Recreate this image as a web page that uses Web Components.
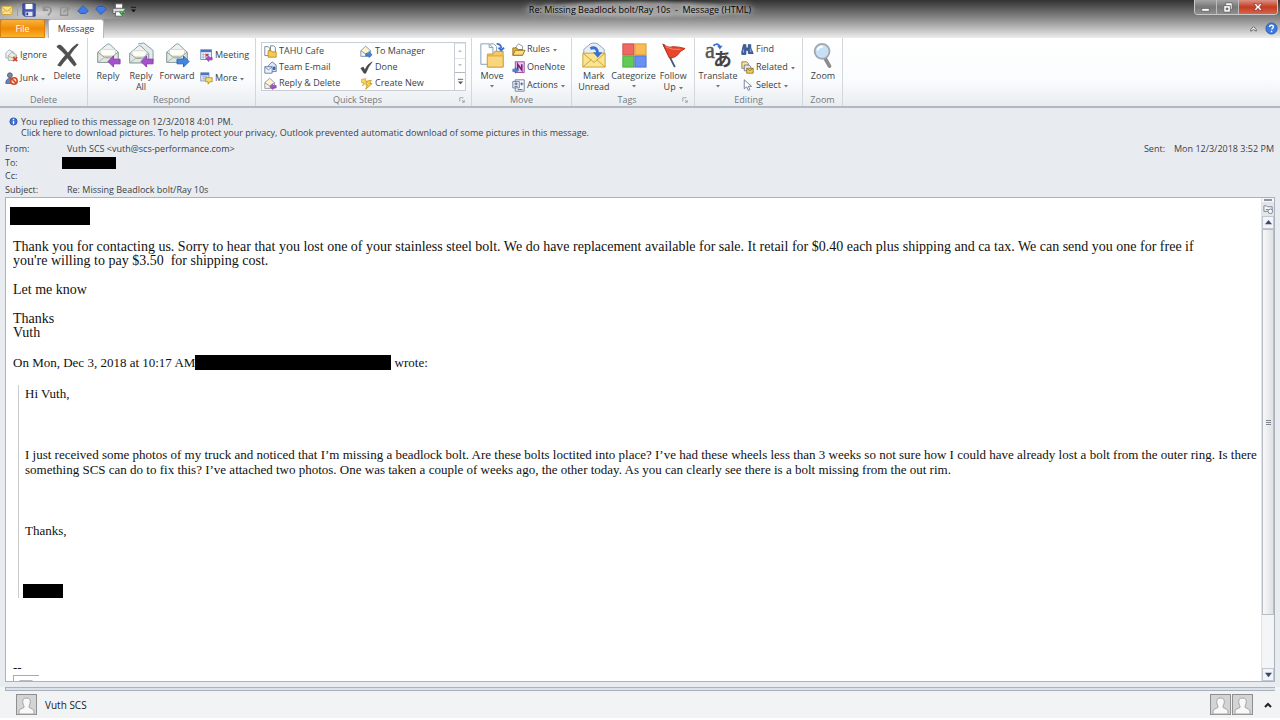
<!DOCTYPE html>
<html lang="en">
<head>
<meta charset="utf-8">
<meta name="viewport" content="width=device-width, initial-scale=1">
<title>Re: Missing Beadlock bolt/Ray 10s - Message (HTML)</title>
<style>
  html, body { margin: 0; height: 100%; }
  body {
    display: flex;
    flex-direction: column;
    overflow: hidden;
    background: #e8ecf1;
    color: #3b3f46;
    font-family: "Open Sans", "Noto Sans", sans-serif;
    font-size: 9px;
    line-height: 12px;
  }
  message-pane { flex: 1; min-height: 0; }
</style>
</head>
<body>
<title-bar>Re: Missing Beadlock bolt/Ray 10s&nbsp; -&nbsp; Message (HTML)</title-bar>
<ribbon-tabs></ribbon-tabs>
<message-ribbon></message-ribbon>
<message-header></message-header>
<message-pane>
  <mail-body></mail-body>
</message-pane>
<people-pane name="Vuth SCS"></people-pane>

<script>
/* ------------------------------------------------------------------ */
/*  Icons                                                              */
/* ------------------------------------------------------------------ */

const ENVELOPE = `
  <path d="M3 11 L13 2.500 Q14.500 1.500 16 2.500 L25 11 V22 H3Z" fill="#edf1f2" stroke="#8497a5"/>
  <path d="M6 8 H22 V15 H6Z" fill="#fdfdf4" stroke="#c3c9bd" stroke-width=".7"/>
  <path d="M3 11 L11 17 H17 L25 11 V22 H3Z" fill="#e3e8df" stroke="#8d9c9c"/>
  <path d="M3 22 L11 16 H17 L25 22" fill="none" stroke="#a5b0ae"/>`;

const PERSON = `
  <rect x=".5" y=".5" width="20" height="20" fill="#d4d4d4" stroke="#8f8f8f"/>
  <path d="M3 20 V17 Q3 15 8 13.500 Q8.500 12.500 7 10 Q5.500 4 10.500 4 Q15.500 4 14 10 Q12.500 12.500 13 13.500 Q18 15 18 17 V20Z" fill="#f9f9f9" stroke="#a5a5a5"/>`;

// name: [viewBox, markup]
const ICONS = {
  mail: ['0 0 16 16', `
    <rect x="1" y="3" width="14" height="11" rx="1" fill="#fbe28a" stroke="#c89a2a"/>
    <path d="M1 4 L8 10 L15 4 M1 13 L6 8 M15 13 L10 8" fill="none" stroke="#c89a2a"/>`],
  save: ['0 0 16 16', `
    <path d="M1 1 H15 V15 H3 L1 13Z" fill="#4658b5" stroke="#27357f"/>
    <rect x="4" y="1" width="8" height="6" fill="#fff"/>
    <rect x="4" y="10" width="8" height="5" fill="#dfe3f3"/><rect x="5" y="11" width="2" height="3" fill="#27357f"/>`],
  undo: ['0 0 16 16', `<path d="M4 3 L4 8 L9 8 M4 8 Q8 2 12 6 Q14 10 9 14" fill="none" stroke="#929292" stroke-width="2"/>`],
  redo: ['0 0 16 16', `<path d="M3 5 V14 H11 V5Z M6 11 L13 4 M9 3 H13 V8" fill="none" stroke="#929292" stroke-width="1.500"/>`],
  up: ['0 0 16 16', `<path d="M8 3 L14 9 L11 12 H5 L2 9Z" fill="#3f7ae8" stroke="#2457b8"/>`],
  down: ['0 0 16 16', `<path d="M8 13 L14 7 L11 4 H5 L2 7Z" fill="#3f7ae8" stroke="#2457b8"/>`],
  print: ['0 0 16 16', `
    <rect x="4" y="1" width="8" height="6" fill="#fff" stroke="#666"/>
    <rect x="1" y="6" width="14" height="6" rx="1" fill="#d7dad8" stroke="#555"/>
    <rect x="4" y="10" width="8" height="5" fill="#fff" stroke="#666"/>
    <path d="M9 10 L11 13 L15 8" fill="none" stroke="#2d9b3b" stroke-width="2"/>`],
  more: ['0 0 8 8', `<path d="M1 1.500 H7" stroke="currentColor"/><path d="M1 4 H7 L4 7Z" fill="currentColor"/>`],

  ignore: ['0 0 16 16', `
    <path d="M1 5 L5 1 L11 4 V11 H1Z" fill="#eef1f1" stroke="#9aa7b0"/>
    <path d="M4 8 L8 4 L14 7 V14 H4Z" fill="#f2ead0" stroke="#9aa7b0"/>
    <path d="M4 8 L9 11 L14 8" fill="none" stroke="#9aa7b0"/>
    <path d="M10 10 L15 15 M15 10 L10 15" stroke="#d5452b" stroke-width="2"/>`],
  junk: ['0 0 16 16', `
    <circle cx="6" cy="4" r="3" fill="#7d8896" stroke="#4c5867"/>
    <path d="M1 14 Q1 8 6 8 Q11 8 11 14Z" fill="#6685bd" stroke="#43598c"/>
    <circle cx="11" cy="11" r="4" fill="#fbe2d8" stroke="#d84a22" stroke-width="2"/>
    <path d="M8 8 L14 14" stroke="#d84a22" stroke-width="2"/>`],
  delete: ['0 0 28 28', `
    <path d="M3 5 Q5 2 8 4 Q12 8 15 12 Q19 6 25 2 L26 3 Q21 8 17 14 Q21 19 24 24 L22 26 Q18 22 14.500 17 Q10 22 7 26 L4 25 Q8 19 12.500 14 Q8 9 3 5Z" fill="#505050" stroke="#3c3c3c" stroke-width=".7"/>`],
  reply: ['0 0 28 28', ENVELOPE + `
    <path d="M14 21 L20 15 V18.500 H27 V23.500 H20 V27Z" fill="#a551c9" stroke="#843aa6"/>`],
  replyall: ['0 0 28 28', `
    <path d="M11 2 L17 1 L27 9 V20 H22" fill="#e4eaee" stroke="#8497a5"/>
    <g transform="translate(-1 2) scale(.93)">${ENVELOPE}</g>
    <path d="M14 21 L20 15 V18.500 H27 V23.500 H20 V27Z" fill="#a551c9" stroke="#843aa6"/>`],
  forward: ['0 0 28 28', ENVELOPE + `
    <path d="M27 21 L21 15 V18.500 H14 V23.500 H21 V27Z" fill="#4286dd" stroke="#2563b4"/>`],
  meeting: ['0 0 16 16', `
    <rect x="1" y="1" width="13" height="12" fill="#fff" stroke="#5b7bb8"/>
    <rect x="1" y="1" width="13" height="3" fill="#4a76c4"/>
    <path d="M4 5 V12 M7 5 V12 M10 5 V12 M2 7 H13 M2 10 H13" stroke="#97a9cd"/>
    <rect x="7" y="6" width="3" height="3" fill="#d2402e"/>
    <path d="M7 12 L11 8.500 V10.500 H15 V13.500 H11 V15.500Z" fill="#a551c9" stroke="#843aa6" stroke-width=".7"/>`],
  moreRespond: ['0 0 16 16', `
    <rect x="1" y="1" width="10" height="10" fill="#e9f0fb" stroke="#7288ad"/>
    <rect x="1" y="1" width="10" height="3" fill="#4a76c4"/>
    <path d="M3 6 H9 M3 8.500 H9" stroke="#7288ad"/>
    <path d="M7 7 H15 V12 H12 L10 15 V12 H7Z" fill="#f8dd6b" stroke="#b18c22"/>`],

  cafe: ['0 0 16 16', `
    <path d="M1 2 H5 L7 4 V13 H1Z" fill="#fff" stroke="#62748c"/>
    <path d="M8 1 H12 L14 3 V9 H8Z" fill="#fff" stroke="#62748c"/>
    <path d="M5 7 H9 L10 8.500 H15 V15 H5Z" fill="#f5c84e" stroke="#b88a1e"/>`],
  team: ['0 0 16 16', `
    <path d="M5 6 L10 1 L15 5 V13 H5Z" fill="#dbe7f7" stroke="#56719f"/>
    <path d="M1 7 H10 V15 H1Z" fill="#eef3fb" stroke="#56719f"/>
    <path d="M1 7 L5.500 11 L10 7" fill="none" stroke="#56719f"/>
    <rect x="11" y="7" width="3" height="4" fill="#3c62b0"/>`],
  replydel: ['0 0 16 16', `
    <path d="M1 7 L7 1.500 L13 7 V14 H1Z" fill="#fdf4cf" stroke="#7b8ea8"/>
    <path d="M1 7 L7 11 L13 7" fill="none" stroke="#7b8ea8"/>
    <path d="M7 12 L11 8.500 V10.500 H15 V13.500 H11 V15.500Z" fill="#a551c9" stroke="#843aa6" stroke-width=".7"/>`],
  manager: ['0 0 16 16', `
    <path d="M1 7 L7 1.500 L13 7 V14 H1Z" fill="#fdf4cf" stroke="#6787b8"/>
    <path d="M1 7 L7 11 L13 7" fill="none" stroke="#6787b8"/>
    <path d="M15 12 L11 8.500 V10.500 H7 V13.500 H11 V15.500Z" fill="#4286dd" stroke="#2563b4" stroke-width=".7"/>`],
  done: ['0 0 16 16', `<path d="M1 9 L4 7.500 L6 11 Q9 4 15 1 Q10 7 7 15 H5Z" fill="#4a4a4a" stroke="#3a3a3a" stroke-width=".7"/>`],
  create: ['0 0 16 16', `
    <path d="M2 3 L7 2 L6 5 L9 5 L3 11 L5 7 L2 7Z" fill="#ffdf62" stroke="#d4a324"/>
    <path d="M9 5 L14 4 L12 8 H15 L7 15 L9 10 H7Z" fill="#fbd04a" stroke="#c39120"/>`],

  move: ['0 0 28 28', `
    <path d="M2 2 H11 L15 6 V24 H2Z" fill="#fff" stroke="#8198b6"/>
    <path d="M11 2 V6 H15 M12 2 H16 L19 5 V10" fill="none" stroke="#8198b6"/>
    <path d="M9 13 H15 L17 10 H26 V27 H9Z" fill="#f5c862" stroke="#cc9930"/>
    <path d="M9 15 H26 V27 H9Z" fill="#f9d67e" stroke="#d4a33e"/>
    <path d="M19 2 Q24 2 24 7 M21 6 L24 9 L27 6" fill="none" stroke="#3b6fd0" stroke-width="2"/>`],
  rules: ['0 0 16 16', `
    <path d="M4 6 L8 1 L13 4 V8" fill="#fff" stroke="#7a8494"/>
    <path d="M1 6 H6 L7 8 H13 V15 H1Z" fill="#e9b43a" stroke="#8a6a1c"/>
    <path d="M4 9 H16 L13 15 H1Z" fill="#fadd78" stroke="#8a6a1c"/>`],
  onenote: ['0 0 16 16', `
    <rect x="4" y="1" width="11" height="13" fill="#e9cdea" stroke="#8b2f8c"/>
    <path d="M7 11 V4 L12 11 V4" fill="none" stroke="#7d1f7e" stroke-width="2"/>
    <path d="M1 10 H4 V8 L8 11.500 L4 15 V13 H1Z" fill="#4a86dd" stroke="#2a5bac" stroke-width=".7"/>`],
  actions: ['0 0 16 16', `
    <path d="M4 1 H15 V15 H4Z" fill="#fafcff" stroke="#5c6f90"/>
    <path d="M1 3 H9 V11 H1Z" fill="#e3ebf8" stroke="#5c6f90"/>
    <path d="M3 6 H7 M5 4 V8 M3 9.500 H7 M12 4 V8 M10 6 H14 M7 13 H13" stroke="#3a4f7c"/>`],

  unread: ['0 0 28 28', `
    <path d="M3 13 L3 8 L10 2 Q14 0 18 2 L25 8 V13" fill="#e9eef3" stroke="#8aa1b7"/>
    <path d="M2 12 H26 V27 H2Z" fill="#fbe48f" stroke="#c79f36"/>
    <path d="M2 12 L14 22 L26 12 M2 27 L11 19 M26 27 L17 19" fill="none" stroke="#c79f36"/>
    <path d="M10 7 Q17 4 18 12" fill="none" stroke="#3b6fd0" stroke-width="3"/>
    <path d="M13 11 H23 L18 17Z" fill="#3b6fd0"/>`],
  categorize: ['0 0 28 28', `
    <rect x="2" y="2" width="12" height="12" fill="#ee6863" stroke="#cd4c48"/>
    <rect x="15" y="2" width="12" height="12" fill="#f8bb56" stroke="#d99a35"/>
    <rect x="2" y="15" width="12" height="12" fill="#63cb55" stroke="#47a83b"/>
    <rect x="15" y="15" width="12" height="12" fill="#6b91f0" stroke="#4a6fd0"/>`],
  follow: ['0 0 28 28', `
    <path d="M4 3 L16 27" stroke="#445a80" stroke-width="2"/>
    <path d="M3 2 Q8 7 14 5 Q20 5 27 7 Q21 10 19 14 Q15 18 10 17Z" fill="#e8472c" stroke="#b92f1a"/>
    <path d="M6 5 Q13 9 22 8" fill="none" stroke="#f58a70"/>`],
  translate: ['0 0 28 28', `
    <text x="0" y="17" font-family="Liberation Serif, serif" font-size="24" fill="#555" stroke="#555" stroke-width=".5">a</text>
    <text x="9" y="26" font-family="Noto Sans CJK JP, sans-serif" font-weight="bold" font-size="20" fill="#444">あ</text>
    <path d="M9 4 Q14 0 16 5" fill="none" stroke="#3b6fd0" stroke-width="2"/><path d="M13 4 H19 L16 8Z" fill="#3b6fd0"/>`],
  find: ['0 0 16 16', `
    <path d="M3 2 H6 V6 H9 V2 H12 V6 L15 13 H9 V9 H6 V14 H1 V11Z" fill="#3f62a3" stroke="#2a457c"/>
    <path d="M3 8 V12 M12 7 V11" stroke="#a9c1ea"/>`],
  related: ['0 0 16 16', `
    <path d="M1 1 H7 L9 3 V9 H1Z" fill="#ffe28a" stroke="#77746a"/>
    <path d="M4 5 H10 L12 7 V12 H4Z" fill="#dfe9f8" stroke="#596b8c"/>
    <path d="M7 9 H15 V15 H7Z" fill="#f8cf57" stroke="#8c6d20"/>
    <path d="M7 9 L11 12 L15 9" fill="none" stroke="#8c6d20"/>`],
  select: ['0 0 16 16', `<path d="M4 1 V12 L7 9.500 L9 14 L11 13 L9 9 H13Z" fill="#fff" stroke="#5c6f90"/>`],
  zoom: ['0 0 28 28', `
    <path d="M16 17 L21 26" stroke="#8b8b8b" stroke-width="4" stroke-linecap="round"/>
    <circle cx="13" cy="10" r="8" fill="#c7e0f6" stroke="#a0a8b0" stroke-width="2"/>
    <path d="M8 9 Q9 5 14 5" fill="none" stroke="#fff" stroke-width="2"/>`],

  launcher: ['0 0 8 8', `<path d="M1 6 V1 H6 M4 4 L7 7 M7 4 V7 H4" fill="none" stroke="#8d949e"/>`],
  person: ['0 0 21 21', PERSON],
  info: ['0 0 10 10', `
    <circle cx="5" cy="5" r="4" fill="#4173cf" stroke="#2d57a8"/>
    <path d="M5 4.500 V8 M5 2 V3.500" stroke="#fff" stroke-width="1.500"/>`],
  help: ['0 0 14 14', `
    <circle cx="7" cy="7" r="6" fill="#3d7be0" stroke="#2a5bb4"/>
    <path d="M5 5.500 Q5 3.500 7 3.500 Q9 3.500 9 5.500 Q9 6.500 7 8 M7 9.500 V11" fill="none" stroke="#fff" stroke-width="1.500"/>`],
  caret: ['0 0 10 10', `<path d="M2 8 V6 L5 3 L8 6 V8 L5 6Z" fill="#fff" stroke="#555"/>`],
  chevron: ['0 0 8 8', `<path d="M1 6 L4 3 L7 6" fill="none" stroke="currentColor" stroke-width="2"/>`],
  tridown: ['0 0 8 8', `<path d="M0 2 H8 L4 7Z" fill="currentColor"/>`],
  triup: ['0 0 8 8', `<path d="M0 6 H8 L4 1Z" fill="currentColor"/>`],
  minimize: ['0 0 12 12', `<rect x="2" y="7" width="8" height="3" fill="#fff" stroke="#555" stroke-width=".7"/>`],
  restore: ['0 0 12 12', `
    <path d="M4 1 H11 V8 H9 V4 H4Z" fill="#fff" stroke="#555" stroke-width=".7"/>
    <path d="M2 4 H9 V11 H2Z M4.500 6.500 V8.500 H6.500 V6.500Z" fill="#fff" fill-rule="evenodd" stroke="#555" stroke-width=".7"/>`],
  close: ['0 0 12 12', `<path d="M1 2 H4 L6 4.500 L8 2 H11 L8 6 L11 10 H8 L6 7.500 L4 10 H1 L4 6Z" fill="#fff" stroke="#723" stroke-width=".7"/>`],
  bookmark: ['0 0 12 12', `
    <path d="M1 2 H4 L5 3 H10 V8 H1Z" fill="#f7f8fa" stroke="#77808c"/>
    <circle cx="8" cy="8" r="2.500" fill="#f7f8fa" stroke="#77808c"/>
    <path d="M3 6 H6" stroke="#77808c"/>`],
  brokenimg: ['0 0 14 14', `<rect x="1" y="1" width="12" height="12" fill="#f4f6f8" stroke="#777"/><path d="M3 4 H11" stroke="#aab"/>`],
};

/* ------------------------------------------------------------------ */
/*  Base                                                               */
/* ------------------------------------------------------------------ */

const RESET = `
  * { box-sizing: border-box; }
  button {
    margin: 0; padding: 0; border: 0; background: none;
    color: inherit; font: inherit; white-space: nowrap;
  }
`;

class BaseElement extends HTMLElement {
  constructor() {
    super();
    this.attachShadow({ mode: 'open' });
  }

  connectedCallback() {
    this.shadowRoot.innerHTML = `<style>${RESET}${this.styles()}</style>${this.render()}`;
  }

  styles() { return ':host { display: block; }'; }
  render() { return '<slot></slot>'; }
}

/** <app-icon name="reply" size="28"> */
class AppIcon extends BaseElement {
  styles() {
    const size = this.getAttribute('size') || 14;
    return `
      :host { display: inline-flex; flex: none; }
      svg { width: ${size}px; height: ${size}px; display: block; overflow: visible; }
    `;
  }
  render() {
    const [box, markup] = ICONS[this.getAttribute('name')];
    return `<svg viewBox="${box}" aria-hidden="true">${markup}</svg>`;
  }
}

/* ------------------------------------------------------------------ */
/*  Window chrome                                                      */
/* ------------------------------------------------------------------ */

class TitleBar extends BaseElement {
  styles() {
    return `
      :host {
        display: grid;
        grid-template-columns: 1fr auto 1fr;
        height: 19px;
        background:
          radial-gradient(ellipse 90px 20px at 40px 13px, rgba(255,255,255,.7), transparent),
          linear-gradient(#323232, #8c8c8c);
      }
      .quick { display: flex; align-items: center; gap: 4px; padding-left: 1px; color: #111; }
      .quick button { display: flex; }
      .sep { width: 1px; height: 12px; background: #9b9b9b; }
      h1 {
        margin: 0; padding: 0 10px; font-size: inherit; font-weight: normal; line-height: 19px; color: #000;
        white-space: nowrap;
        background: radial-gradient(closest-side, rgba(190,190,190,.6) 60%, transparent);
        text-shadow: 0 0 4px #ccc, 0 0 8px #ccc, 0 0 12px #bbb;
      }
      .controls {
        display: flex; justify-self: end; height: 15px; margin-right: 2px;
        border: 1px solid #c9c9c9; border-top: 0; border-radius: 0 0 4px 4px; overflow: hidden;
      }
      .controls button {
        display: flex; align-items: center; justify-content: center; width: 22px;
        background: linear-gradient(#a5a5a5, #777 50%, #8f8f8f); border-right: 1px solid #bbb;
      }
      .controls .close { width: 38px; border: 0; background: linear-gradient(#dc9286, #c43c22 50%, #d4664d); }
    `;
  }
  render() {
    const quick = [['save', 'Save'], ['undo', 'Undo'], ['redo', 'Redo'], ['up', 'Previous'], ['down', 'Next'], ['print', 'Quick Print']];
    return `
      <div class="quick">
        <app-icon name="mail" size="12"></app-icon>
        <span class="sep"></span>
        ${quick.map(([icon, label]) => `<button aria-label="${label}"><app-icon name="${icon}"></app-icon></button>`).join('')}
        <button aria-label="Customize"><app-icon name="more" size="7"></app-icon></button>
      </div>
      <h1><slot></slot></h1>
      <div class="controls">
        <button aria-label="Minimize"><app-icon name="minimize" size="11"></app-icon></button>
        <button aria-label="Restore"><app-icon name="restore" size="11"></app-icon></button>
        <button class="close" aria-label="Close"><app-icon name="close" size="10"></app-icon></button>
      </div>
    `;
  }
}

class RibbonTabs extends BaseElement {
  styles() {
    return `
      :host {
        display: flex; align-items: stretch; height: 19px; padding-right: 2px;
        background: linear-gradient(#8c8c8c, #ededed);
      }
      button { border-radius: 3px 3px 0 0; }
      .file {
        width: 45px; color: #fff; border: 1px solid #d97c0a;
        background: linear-gradient(#f9b23b, #f08a05 50%, #fbb32c);
      }
      .active { width: 56px; margin-left: 3px; background: #fff; border: 1px solid #b6babf; border-bottom: 0; }
      .end { display: flex; align-items: center; gap: 7px; margin-left: auto; }
      .end button { display: flex; }
    `;
  }
  render() {
    return `
      <button class="file">File</button>
      <button class="active">Message</button>
      <div class="end">
        <button aria-label="Minimize the Ribbon"><app-icon name="caret" size="9"></app-icon></button>
        <button aria-label="Help"><app-icon name="help" size="13"></app-icon></button>
      </div>
    `;
  }
}

/* ------------------------------------------------------------------ */
/*  Ribbon                                                             */
/* ------------------------------------------------------------------ */

/**
 * <ribbon-button icon="reply" large>Reply</ribbon-button>
 * "menu" adds a drop-down arrow: "inline" after the text, "below" under it.
 */
class RibbonButton extends BaseElement {
  styles() {
    return `
      :host { display: block; }
      button { display: flex; align-items: center; gap: 2px; height: 16px; line-height: 12px; }
      .arrow { margin-left: 3px; color: #70757c; display: inline-flex; vertical-align: middle; }
      :host([large]) button {
        flex-direction: column; gap: 1px; width: 100%; height: 53px; padding-top: 2px;
        line-height: 11px; white-space: normal; text-align: center;
      }
      :host([large]) .text { display: block; padding-top: 1px; }
      :host([large]) .arrow.below { display: flex; margin: 2px 0 0; }
    `;
  }
  render() {
    const large = this.hasAttribute('large');
    const menu = this.getAttribute('menu');
    const arrow = menu ? `<span class="arrow ${menu}"><app-icon name="tridown" size="4"></app-icon></span>` : '';
    return `
      <button>
        <app-icon name="${this.getAttribute('icon')}" size="${large ? 26 : 13}"></app-icon>
        <span class="text"><slot></slot>${menu === 'inline' ? arrow : ''}</span>
        ${menu === 'below' ? arrow : ''}
      </button>
    `;
  }
}

/** <ribbon-group label="Tags" launcher> */
class RibbonGroup extends BaseElement {
  styles() {
    return `
      :host {
        display: flex; flex-direction: column; flex: none;
        border-right: 1px solid #d3d7dc;
      }
      .items { display: flex; flex: 1; min-height: 0; padding: 2px 4px 0 5px; }
      footer { display: flex; align-items: center; height: 12px; color: #73787f; text-align: center; }
      footer span { flex: 1; }
      footer button { display: flex; width: 12px; }
    `;
  }
  render() {
    const launcher = this.hasAttribute('launcher')
      ? `<button aria-label="${this.getAttribute('label')} options"><app-icon name="launcher" size="6"></app-icon></button>`
      : '';
    return `
      <div class="items"><slot></slot></div>
      <footer><span>${this.getAttribute('label')}</span>${launcher}</footer>
    `;
  }
}

class QuickSteps extends BaseElement {
  styles() {
    return `
      :host {
        display: flex; width: 205px; height: 49px; margin-top: 2px;
        background: #fff; border: 1px solid #c9ced4; box-sizing: border-box;
      }
      .steps {
        display: grid; flex: 1; grid-template-columns: 96px 1fr; grid-auto-rows: 16px;
        padding-left: 2px;
      }
      .scroll { display: grid; width: 11px; border-left: 1px solid #c9ced4; }
      .scroll button { display: flex; align-items: center; justify-content: center; color: #c0c4c9; border-top: 1px solid #e2e5e8; }
      .scroll button:last-child { color: #555; border-top: 1px solid #b4b9bf; }
    `;
  }
  render() {
    return `
      <div class="steps"><slot></slot></div>
      <div class="scroll">
        <button aria-label="Row up"><app-icon name="triup" size="4"></app-icon></button>
        <button aria-label="Row down"><app-icon name="tridown" size="4"></app-icon></button>
        <button aria-label="More"><app-icon name="more" size="7"></app-icon></button>
      </div>
    `;
  }
}

class MessageRibbon extends BaseElement {
  styles() {
    return `
      :host {
        display: flex; height: 70px; overflow: hidden; box-sizing: border-box;
        background: linear-gradient(#fff, #fbfcfd 60%, #e9edf1);
        border-bottom: 2px solid #b3b9c0;
      }
      .col { display: grid; align-content: start; grid-auto-rows: 18px; padding: 1px 0 0 5px; }
      .two { grid-auto-rows: 23px; padding-top: 7px; }
      .first { padding-left: 0; width: 47px; }
      .w88 { width: 88px; } .w168 { width: 168px; } .w216 { width: 216px; }
      .w100 { width: 100px; } .w123 { width: 123px; } .w108 { width: 108px; } .w40 { width: 40px; }
      .b30 { width: 30px; } .b34 { width: 34px; } .b36 { width: 36px; } .b46 { width: 46px; }
    `;
  }
  render() {
    return `
      <ribbon-group class="w88" label="Delete">
        <div class="col two first">
          <ribbon-button icon="ignore">Ignore</ribbon-button>
          <ribbon-button icon="junk" menu="inline">Junk</ribbon-button>
        </div>
        <ribbon-button class="b30" large icon="delete">Delete</ribbon-button>
      </ribbon-group>
      <ribbon-group class="w168" label="Respond">
        <ribbon-button class="b30" large icon="reply">Reply</ribbon-button>
        <ribbon-button class="b36" large icon="replyall">Reply<br>All</ribbon-button>
        <ribbon-button class="b36" large icon="forward">Forward</ribbon-button>
        <div class="col two">
          <ribbon-button icon="meeting">Meeting</ribbon-button>
          <ribbon-button icon="moreRespond" menu="inline">More</ribbon-button>
        </div>
      </ribbon-group>
      <ribbon-group class="w216" label="Quick Steps" launcher>
        <quick-steps>
          <ribbon-button icon="cafe">TAHU Cafe</ribbon-button>
          <ribbon-button icon="manager">To Manager</ribbon-button>
          <ribbon-button icon="team">Team E-mail</ribbon-button>
          <ribbon-button icon="done">Done</ribbon-button>
          <ribbon-button icon="replydel">Reply &amp; Delete</ribbon-button>
          <ribbon-button icon="create">Create New</ribbon-button>
        </quick-steps>
      </ribbon-group>
      <ribbon-group class="w100" label="Move">
        <ribbon-button class="b30" large icon="move" menu="below">Move</ribbon-button>
        <div class="col">
          <ribbon-button icon="rules" menu="inline">Rules</ribbon-button>
          <ribbon-button icon="onenote">OneNote</ribbon-button>
          <ribbon-button icon="actions" menu="inline">Actions</ribbon-button>
        </div>
      </ribbon-group>
      <ribbon-group class="w123" label="Tags" launcher>
        <ribbon-button class="b34" large icon="unread">Mark Unread</ribbon-button>
        <ribbon-button class="b46" large icon="categorize" menu="below">Categorize</ribbon-button>
        <ribbon-button class="b34" large icon="follow" menu="inline">Follow<br>Up</ribbon-button>
      </ribbon-group>
      <ribbon-group class="w108" label="Editing">
        <ribbon-button class="b36" large icon="translate" menu="below">Translate</ribbon-button>
        <div class="col">
          <ribbon-button icon="find">Find</ribbon-button>
          <ribbon-button icon="related" menu="inline">Related</ribbon-button>
          <ribbon-button icon="select" menu="inline">Select</ribbon-button>
        </div>
      </ribbon-group>
      <ribbon-group class="w40" label="Zoom">
        <ribbon-button class="b30" large icon="zoom">Zoom</ribbon-button>
      </ribbon-group>
    `;
  }
}

/* ------------------------------------------------------------------ */
/*  Message                                                            */
/* ------------------------------------------------------------------ */

class MessageHeader extends BaseElement {
  styles() {
    return `
      :host { display: block; padding: 8px 6px 0 5px; }
      .info { display: grid; grid-template-columns: 15px 1fr; align-items: center; padding-left: 1px; line-height: 11px; }
      .info app-icon { justify-self: center; }
      .info button { grid-column: 2; justify-self: start; line-height: 12px; }
      .fields { display: flex; justify-content: space-between; padding-top: 3px; }
      dl { display: grid; grid-template-columns: 62px auto; grid-auto-rows: 14px 13px; align-items: center; margin: 0; }
      dd { margin: 0; }
      .sent { grid-template-columns: auto auto; column-gap: 9px; }
    `;
  }
  render() {
    return `
      <div class="info">
        <app-icon name="info" size="9"></app-icon>
        <span>You replied to this message on 12/3/2018 4:01 PM.</span>
        <button>Click here to download pictures. To help protect your privacy, Outlook prevented automatic download of some pictures in this message.</button>
      </div>
      <div class="fields">
        <dl>
          <dt>From:</dt><dd>Vuth SCS &lt;vuth@scs-performance.com&gt;</dd>
          <dt>To:</dt><dd><redacted-text style="--w: 54px; --h: 12px; margin-left: -5px"></redacted-text></dd>
          <dt>Cc:</dt><dd></dd>
          <dt>Subject:</dt><dd>Re: Missing Beadlock bolt/Ray 10s</dd>
        </dl>
        <dl class="sent"><dt>Sent:</dt><dd>Mon 12/3/2018 3:52 PM</dd></dl>
      </div>
    `;
  }
}

/** Black bar over a name or an address. Size comes from --w and --h. */
class RedactedText extends BaseElement {
  styles() {
    return `:host {
      display: inline-block; width: var(--w); height: var(--h);
      background: #000; vertical-align: top;
    }`;
  }
  render() { return ''; }
}

class MessagePane extends BaseElement {
  styles() {
    return `
      :host { display: flex; margin: 1px 5px 5px; background: #fff; border: 1px solid #a9b2bd; }
      .content { flex: 1; min-width: 0; overflow: hidden; }
      .bar { display: flex; flex-direction: column; width: 13px; background: #f4f5f6; border-left: 1px solid #dfe3e8; }
      .split { height: 2px; margin: 1px 2px; background: #8d97a3; }
      .bar button {
        display: flex; align-items: center; justify-content: center; height: 13px;
        color: #3b4a6b; background: #f2f4f7; border: 1px solid #c2c8d0;
      }
      .bar .mark { border: 0; background: #e2e6ea; height: 14px; }
      .track { flex: 1; display: flex; flex-direction: column; }
      .thumb {
        display: grid; place-content: center; gap: 1px; height: 88%;
        background: linear-gradient(90deg, #f7f8f9, #dfe1e4); border: 1px solid #b9bec5;
      }
      .thumb i { width: 5px; height: 1px; background: #7f868f; }
    `;
  }
  render() {
    return `
      <div class="content"><slot></slot></div>
      <div class="bar">
        <div class="split"></div>
        <button class="mark" aria-label="Select browse object"><app-icon name="bookmark" size="11"></app-icon></button>
        <button aria-label="Scroll up"><app-icon name="triup" size="7"></app-icon></button>
        <div class="track"><div class="thumb"><i></i><i></i><i></i></div></div>
        <button aria-label="Scroll down"><app-icon name="tridown" size="7"></app-icon></button>
      </div>
    `;
  }
}

class MailBody extends BaseElement {
  styles() {
    return `
      :host {
        display: block; padding: 8px 4px 0 7px; color: #111;
        font-family: "Liberation Serif", serif; font-size: 13px; line-height: 15px;
      }
      p { margin: 0 0 15px; }
      .name { display: block; --w: 80px; --h: 18px; margin: 1px 0 15px -3px; }
      .reply { padding-right: 32px; font-size: 14px; line-height: 14px; }
      .reply p { margin-bottom: 15px; }
      blockquote { margin: 0 0 0 5px; padding: 1px 0 0 6px; border-left: 1px solid #ccc; }
      blockquote p { margin-bottom: 46px; }
      .sign { display: block; --w: 40px; --h: 14px; margin-left: -2px; }
      .sig { margin: 62px 0 0; }
      .image { width: 26px; height: 26px; padding: 4px 5px; border: 1px solid #aaa; border-right: 0; }
    `;
  }
  render() {
    return `
      <redacted-text class="name"></redacted-text>
      <div class="reply">
        <p>Thank you for contacting us. Sorry to hear that you lost one of your stainless steel bolt. We do have replacement available for sale. It retail for $0.40 each plus shipping and ca tax. We can send you one for free if you're willing to pay $3.50&nbsp; for shipping cost.</p>
        <p>Let me know</p>
        <p>Thanks<br>Vuth</p>
      </div>
      <p>On Mon, Dec 3, 2018 at 10:17 AM<redacted-text style="--w: 196px; --h: 15px"></redacted-text> wrote:</p>
      <blockquote>
        <p>Hi Vuth,</p>
        <p>I just received some photos of my truck and noticed that I’m missing a beadlock bolt. Are these bolts loctited into place? I’ve had these wheels less than 3 weeks so not sure how I could have already lost a bolt from the outer ring. Is there something SCS can do to fix this? I’ve attached two photos. One was taken a couple of weeks ago, the other today. As you can clearly see there is a bolt missing from the out rim.</p>
        <p>Thanks,</p>
        <redacted-text class="sign"></redacted-text>
      </blockquote>
      <p class="sig">--</p>
      <div class="image"><app-icon name="brokenimg" size="14"></app-icon></div>
    `;
  }
}

class PeoplePane extends BaseElement {
  styles() {
    return `
      :host { display: block; background: #f1f3f5; border-bottom: 2px solid #fff; }
      .splitter { height: 4px; background: #dde2e8; border: 1px solid #a9b2bd; border-right: 0; margin: 0 5px; }
      .row { display: flex; align-items: center; gap: 1px; height: 27px; padding: 0 8px 0 16px; color: #222; }
      .row button { display: flex; }
      .name { flex: 1; padding-left: 7px; font-size: 10px; }
      .toggle { margin-left: 10px; }
    `;
  }
  render() {
    return `
      <div class="splitter"></div>
      <div class="row">
        <app-icon name="person" size="21"></app-icon>
        <span class="name">${this.getAttribute('name')}</span>
        <button aria-label="Sender"><app-icon name="person" size="21"></app-icon></button>
        <button aria-label="Recipient"><app-icon name="person" size="21"></app-icon></button>
        <button class="toggle" aria-label="Expand"><app-icon name="chevron" size="8"></app-icon></button>
      </div>
    `;
  }
}

customElements.define('app-icon', AppIcon);
customElements.define('redacted-text', RedactedText);
customElements.define('title-bar', TitleBar);
customElements.define('ribbon-tabs', RibbonTabs);
customElements.define('ribbon-button', RibbonButton);
customElements.define('ribbon-group', RibbonGroup);
customElements.define('quick-steps', QuickSteps);
customElements.define('message-ribbon', MessageRibbon);
customElements.define('message-header', MessageHeader);
customElements.define('message-pane', MessagePane);
customElements.define('mail-body', MailBody);
customElements.define('people-pane', PeoplePane);
</script>
</body>
</html>
